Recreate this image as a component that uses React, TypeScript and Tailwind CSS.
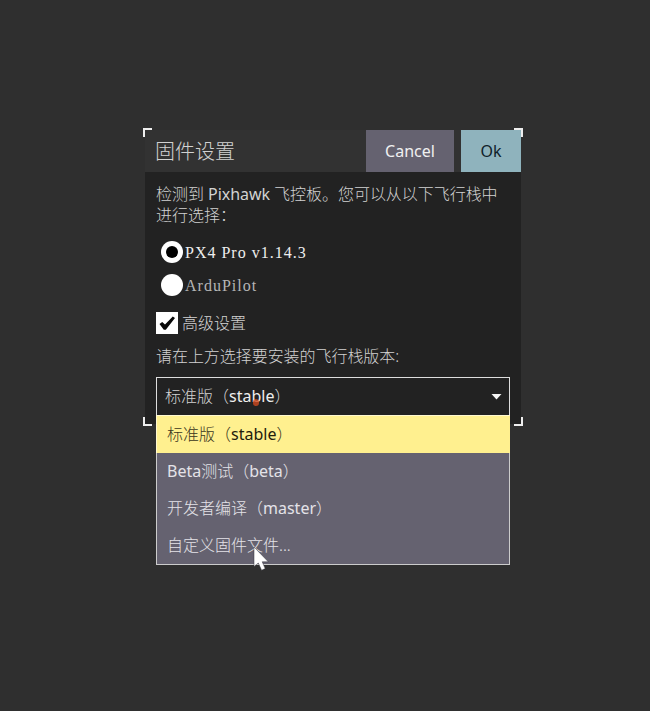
import React from "react";

function Corner({ className }: { className: string }) {
  return <span className={`absolute h-[9px] w-[9px] border-[#eeeeee] ${className}`} />;
}

function Line({ children, className = "" }: { children: React.ReactNode; className?: string }) {
  return <div className={`whitespace-nowrap ${className}`}>{children}</div>;
}

const options = ["Beta测试（beta）", "开发者编译（master）", "自定义固件文件..."];

export default function App() {
  return (
    <div className="flex h-[711px] w-[650px] items-start bg-[#2f2f2f] pl-[145px] pt-[130px] font-['Noto_Sans','Noto_Sans_CJK_SC',sans-serif] text-[16px] font-light leading-[21px] text-[#d2d2d2]">
      <div className="relative h-[294px] w-[376px] bg-[#222222]">
        <header className="flex h-[42px] bg-[#323232]">
          <h1 className="flex-1 pl-[10px] text-[20px] font-light leading-[43px]">固件设置</h1>
          <button className="w-[88px] bg-[#656270] font-normal text-[#f0f0f0]">Cancel</button>
          <button className="ml-[7px] w-[60px] bg-[#8fb3bd] font-normal text-[#10222a]">Ok</button>
        </header>
        <Corner className="-left-[2px] -top-[2px] border-l-2 border-t-2" />
        <Corner className="-right-[2px] -top-[2px] border-r-2 border-t-2" />
        <Corner className="-bottom-[2px] -left-[2px] border-b-2 border-l-2" />
        <Corner className="-bottom-[2px] -right-[2px] border-b-2 border-r-2" />

        <main className="px-[11px] pt-3">
          <Line className="tracking-[-0.04px]">
            检测到 <span className="font-normal">Pixhawk</span> 飞控板。您可以从以下飞行栈中
          </Line>
          <Line>进行选择：</Line>

          <div className="mt-[15px] flex h-[22px] items-center pl-[5px] font-['Liberation_Serif',serif] tracking-[1px] text-[#eeeeee]">
            <span className="mr-[2px] flex h-[22px] w-[22px] items-center justify-center rounded-full bg-white">
              <span className="h-3 w-3 rounded-full bg-black" />
            </span>
            PX4 Pro v1.14.3
          </div>
          <div className="mt-[11px] flex h-[22px] items-center pl-[5px] font-['Liberation_Serif',serif] tracking-[1px] text-[#b5b5b5]">
            <span className="mr-[2px] h-[22px] w-[22px] rounded-full bg-white" />
            ArduPilot
          </div>
          <div className="mt-4 flex h-[22px] items-center">
            <span className="mr-1 flex h-[22px] w-[22px] items-center justify-center bg-white">
              <svg width="18" height="18" viewBox="0 0 18 18">
                <path d="M1.5 10 L4.2 8 L7 10.5 L14.8 2.5 L17 4 L7.8 15.8 L5.8 15.8 Z" fill="#080808" />
              </svg>
            </span>
            高级设置
          </div>
          <Line className="mt-3 tracking-[-0.05px]">请在上方选择要安装的飞行栈版本:</Line>

          <div className="relative mt-[10px] h-[39px] w-[354px] border border-[#dddddd]">
            <div className="flex h-full items-center justify-between pl-2 pr-[7px]">
              <span>
                标准版（<span className="font-normal text-[#eeeeee]">stable</span>）
              </span>
              <svg width="11" height="7" viewBox="0 0 11 7">
                <path d="M0.5 1 H10.5 L5.5 6.5 Z" fill="#f5f5f5" />
              </svg>
            </div>
            <span className="absolute left-[96px] top-[21px] h-[7px] w-[6px] rounded-full bg-[#cf4a20]/80" />
            <div className="absolute -left-px top-[37px] w-[354px] border border-[#cccccc] bg-[#656270] leading-[37px]">
              <div className="-mx-px -mt-px h-[38px] border-l border-t border-[#fff8d0] bg-[#fff08f] pl-[10px] text-[#3a3620]">
                标准版（<span className="font-normal text-[#22200c]">stable</span>）
              </div>
              {options.map((option) => (
                <div key={option} className="h-[37px] whitespace-nowrap pl-[10px] text-[#e4e2e8]">
                  {option.split(/([A-Za-z]+)/).map((part, i) => (
                    <span key={i} className={i % 2 ? "font-normal" : ""}>{part}</span>
                  ))}
                </div>
              ))}
              <svg className="absolute left-[96px] top-[130px]" width="18" height="26" viewBox="0 0 18 26">
                <path d="M1 1 V20.5 L5.3 17 L8.6 24.3 L12.2 22.6 L9.2 15.8 H15.3 Z" fill="white" stroke="#33323a" strokeWidth="0.5" />
              </svg>
            </div>
          </div>
        </main>
      </div>
    </div>
  );
}
